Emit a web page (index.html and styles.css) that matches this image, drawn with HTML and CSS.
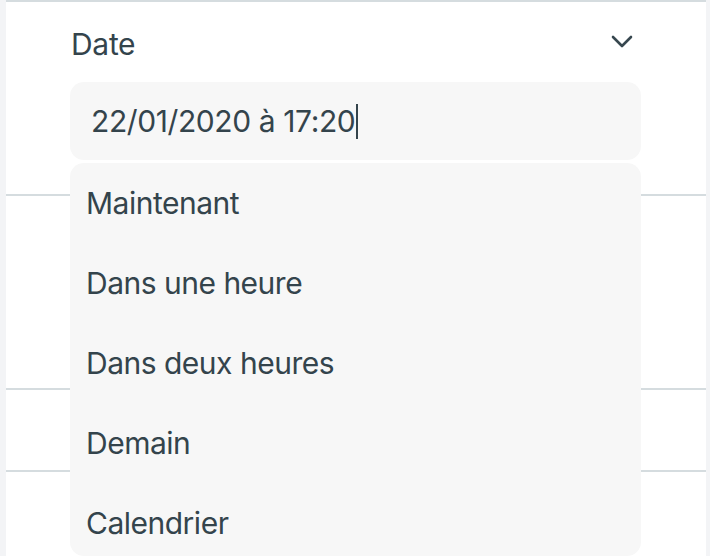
FILE: index.html
```html
<!DOCTYPE html>
<html lang="fr">
<head>
<meta charset="utf-8">
<link rel="stylesheet" href="styles.css">
</head>
<body>
<div class="panel">
  <section class="row row-date">
    <div class="field-head">
      <span class="label">Date</span>
      <svg class="chevron" width="22" height="14" viewBox="0 0 22 14"><path d="M2 2 L11 11 L20 2" fill="none" stroke="#37474f" stroke-width="2.6" stroke-linecap="round" stroke-linejoin="round"/></svg>
    </div>
    <div class="input"><span class="value">22/01/2020 à 17:20</span><span class="caret"></span></div>
  </section>
  <section class="row row-2"></section>
  <section class="row row-3"></section>
  <section class="row row-4"></section>
</div>
<ul class="menu">
  <li>Maintenant</li>
  <li>Dans une heure</li>
  <li>Dans deux heures</li>
  <li>Demain</li>
  <li>Calendrier</li>
</ul>
</body>
</html>
```
FILE: styles.css
```css
html, body {
  margin: 0;
  padding: 0;
}
body {
  background: #f3f4f6;
  font-family: Inter, "Noto Sans", sans-serif;
  color: #34444c;
  height: 556px;
  overflow: hidden;
  position: relative;
}
.panel {
  margin: 0 4px 0 6px;
  background: #ffffff;
  border-top: 2px solid #d5dcdf;
}
.row {
  padding: 0 65px 0 64px;
  border-bottom: 2px solid #d5dcdf;
}
.row-date { height: 192px; }
.row-2 { height: 192px; }
.row-3 { height: 80px; }
.row-4 { height: 84px; border-bottom: none; }
.field-head {
  height: 80px;
  display: flex;
  align-items: center;
  justify-content: space-between;
}
.label {
  font-size: 30px;
  letter-spacing: -0.3px;
  line-height: 80px;
  padding-left: 1px;
  margin-top: 3px;
}
.chevron {
  margin-right: 8px;
  margin-top: -1px;
}
.input {
  height: 78px;
  background: #f7f7f7;
  border-radius: 14px;
  padding-left: 21px;
  display: flex;
  align-items: center;
}
.value {
  font-size: 30px;
  letter-spacing: -0.4px;
}
.caret {
  display: inline-block;
  width: 2px;
  height: 35px;
  background: #34444c;
  margin-left: 1px;
}
.menu {
  position: absolute;
  left: 70px;
  top: 163px;
  width: 571px;
  height: 393px;
  margin: 0;
  padding: 0;
  list-style: none;
  background: #f7f7f7;
  border-radius: 14px;
}
.menu li {
  height: 80px;
  line-height: 80px;
  padding-left: 16px;
  font-size: 30px;
  letter-spacing: -0.5px;
}
```
